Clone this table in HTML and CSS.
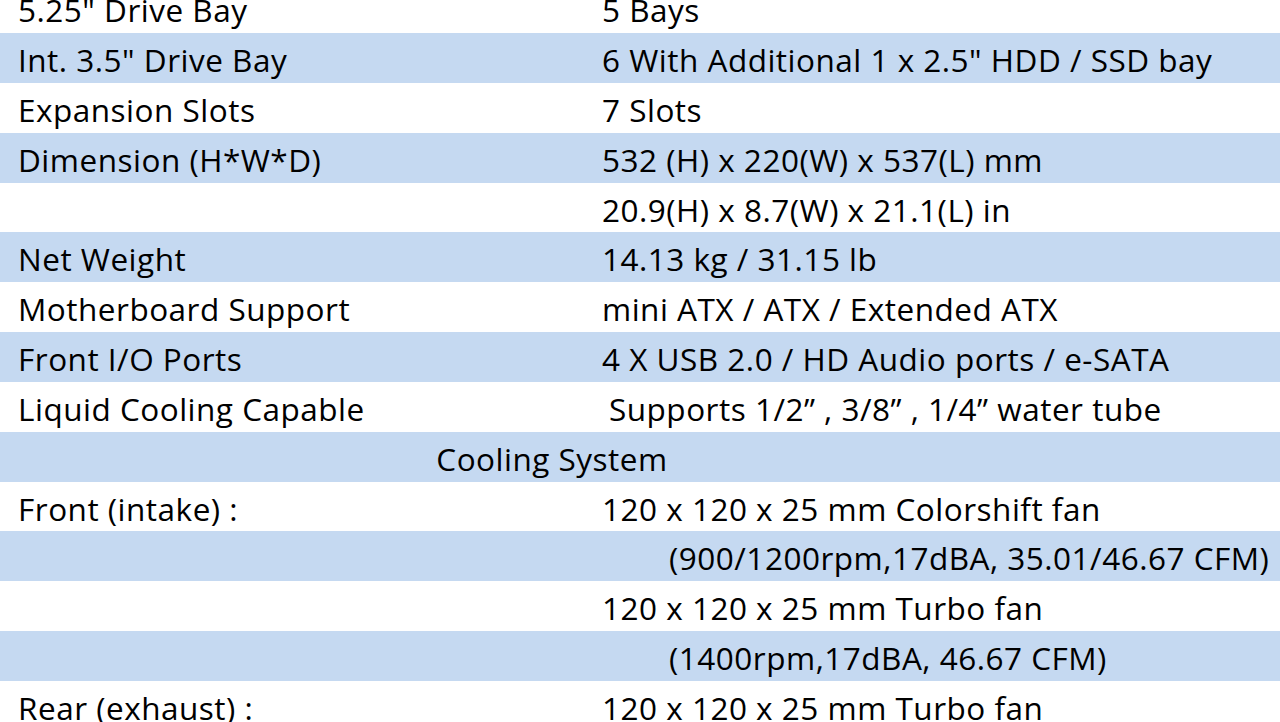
FILE: index.html
```html
<!DOCTYPE html>
<html lang="en">
<head>
<meta charset="utf-8">
<title>Specifications</title>
<link rel="stylesheet" href="styles.css">
</head>
<body>
<div class="sheet">
<table class="spec">
  <tbody>
    <tr class="white"><td class="label">5.25" Drive Bay</td><td class="value">5 Bays</td></tr>
    <tr class="blue"><td class="label">Int. 3.5" Drive Bay</td><td class="value">6 With Additional 1 x 2.5" HDD / SSD bay</td></tr>
    <tr class="white"><td class="label">Expansion Slots</td><td class="value">7 Slots</td></tr>
    <tr class="blue"><td class="label">Dimension (H*W*D)</td><td class="value">532 (H) x 220(W) x 537(L) mm</td></tr>
    <tr class="white"><td class="label"></td><td class="value">20.9(H) x 8.7(W) x 21.1(L) in</td></tr>
    <tr class="blue"><td class="label">Net Weight</td><td class="value">14.13 kg / 31.15 lb</td></tr>
    <tr class="white"><td class="label">Motherboard Support</td><td class="value">mini ATX / ATX / Extended ATX</td></tr>
    <tr class="blue"><td class="label">Front I/O Ports</td><td class="value">4 X USB 2.0 / HD Audio ports / e-SATA</td></tr>
    <tr class="white"><td class="label">Liquid Cooling Capable</td><td class="value value-s">Supports 1/2” , 3/8” , 1/4” water tube</td></tr>
    <tr class="blue"><td class="section" colspan="2">Cooling System</td></tr>
    <tr class="white"><td class="label">Front (intake) :</td><td class="value">120 x 120 x 25 mm Colorshift fan</td></tr>
    <tr class="blue"><td class="label"></td><td class="value value-sub">(900/1200rpm,17dBA, 35.01/46.67 CFM)</td></tr>
    <tr class="white"><td class="label"></td><td class="value">120 x 120 x 25 mm Turbo fan</td></tr>
    <tr class="blue"><td class="label"></td><td class="value value-sub">(1400rpm,17dBA, 46.67 CFM)</td></tr>
    <tr class="white"><td class="label">Rear (exhaust) :</td><td class="value">120 x 120 x 25 mm Turbo fan</td></tr>
  </tbody>
</table>
</div>
</body>
</html>
```
FILE: styles.css
```css
html, body {
  margin: 0;
  padding: 0;
  background: #ffffff;
  overflow: hidden;
}

.sheet {
  width: 1280px;
  margin-top: -16.85px;
}

.spec {
  width: 1280px;
  border-collapse: collapse;
  table-layout: fixed;
  font-family: "Open Sans", Lato, sans-serif;
  font-size: 31.5px;
  letter-spacing: 0.5px;
  color: #000000;
}

.spec tr {
  height: 49.85px;
}

.spec tr.blue {
  background: #c5d9f1;
}

.spec tr.white {
  background: #ffffff;
}

.spec td {
  box-sizing: border-box;
  height: 49.85px;
  padding: 4px 0 0 18px;
  line-height: 45.85px;
  white-space: nowrap;
  vertical-align: top;
  overflow: hidden;
}

.spec td.label {
  width: 584px;
}

.spec td.value-s {
  padding-left: 25px;
}

.spec td.value-sub {
  padding-left: 85px;
}

.spec td.section {
  text-align: center;
  padding-left: 0;
  padding-right: 176px;
}
```
